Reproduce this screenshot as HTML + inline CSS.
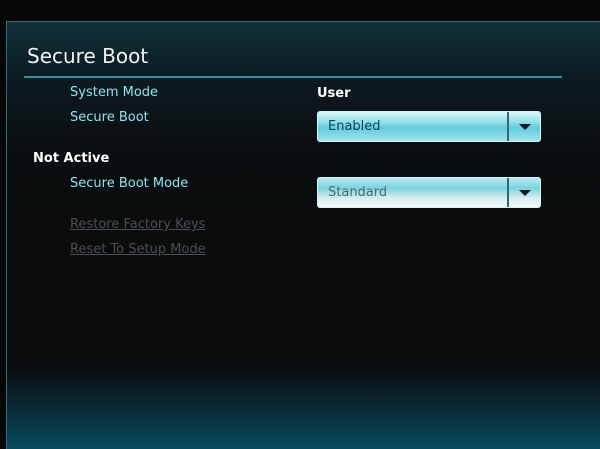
<!DOCTYPE html>
<html><head><style>
*{margin:0;padding:0;box-sizing:border-box}
html,body{width:600px;height:449px;overflow:hidden}
body{background:#070707;font-family:"DejaVu Sans","Liberation Sans",sans-serif;position:relative}
.panel{position:absolute;left:6px;top:21px;width:594px;height:428px;border-left:1px solid #2f6e7c;border-top:1px solid #2c6d7c;
background:linear-gradient(180deg,#10303a 0%,#0c1c22 12%,#0b0e10 30%,#0a0b0c 60%,#0a0b0c 80%,#0c2530 89%,#064a5e 100%)}
.t{position:absolute;white-space:nowrap}
.title{left:27px;top:44px;font-size:20px;color:#f2f2f2}
.line{position:absolute;left:24px;top:76px;width:538px;height:2px;background:#3a8ca0}
.lbl{color:#8fe3f3;font-size:13px}
.w{color:#fff;font-size:13px;font-weight:bold}
.dis{color:#4a4e50;font-size:13px;text-decoration:underline}
.dd{position:absolute;left:317px;width:224px;height:31px;border-radius:3px;border:1px solid #d8f4f8}
.dd span{position:absolute;left:10px;top:7px;font-size:13px}
.dd .btn{position:absolute;right:0;top:0;width:33px;height:100%;border-left:2px solid #2b6a78}
.dd .btn:after{content:"";position:absolute;left:10px;top:12px;border-left:6px solid transparent;border-right:6px solid transparent;border-top:6px solid #0c1a1e}
</style></head><body>
<div class="panel"></div>
<div class="t title">Secure Boot</div>
<div class="line"></div>
<div class="t lbl" style="left:70px;top:85px">System Mode</div>
<div class="t w" style="left:317px;top:86px">User</div>
<div class="t lbl" style="left:70px;top:110px">Secure Boot</div>
<div class="dd" style="top:111px;background:linear-gradient(180deg,#d9f6f9 0%,#8fe0eb 35%,#62cbda 55%,#9fe3ec 100%)"><span style="color:#0b4652">Enabled</span><div class="btn"></div></div>
<div class="t w" style="left:33px;top:151px">Not Active</div>
<div class="t lbl" style="left:70px;top:176px">Secure Boot Mode</div>
<div class="dd" style="top:177px;background:linear-gradient(180deg,#b9e7ee 0%,#7dd2de 35%,#d9eef0 70%,#f4f8f8 100%)"><span style="color:#4a6c72">Standard</span><div class="btn"></div></div>
<div class="t dis" style="left:70px;top:217px">Restore Factory Keys</div>
<div class="t dis" style="left:70px;top:242px">Reset To Setup Mode</div>
</body></html>
